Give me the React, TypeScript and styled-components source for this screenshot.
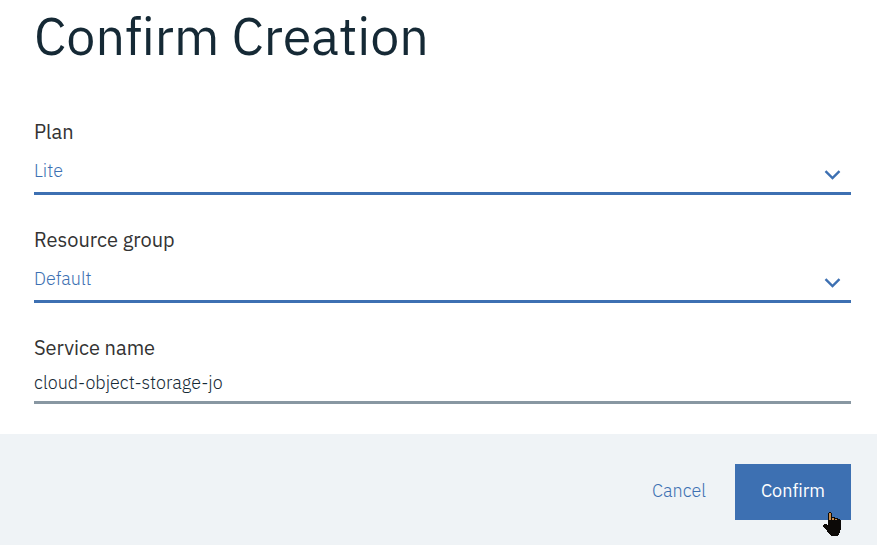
import React from "react";
import styled, { createGlobalStyle } from "styled-components";

const blue = "#3d70b2";
const navy = "#152935";

const GlobalStyle = createGlobalStyle`
  *, *::before, *::after { box-sizing: border-box; }
  body { margin: 0; background: #fff; }
  body, button, input, select {
    font-family: "IBM Plex Sans", Roboto, "Liberation Sans", sans-serif;
    font-variant-ligatures: none;
  }
`;

const Dialog = styled.form`
  display: flex;
  flex-direction: column;
  min-height: 100vh;
`;

const Content = styled.div`
  padding: 0 26px 30px 34px;
`;

const Title = styled.h1`
  margin: 0;
  padding: 4px 0 52px;
  color: ${navy};
  font-size: 52px;
  line-height: 64px;
  font-weight: 400;
`;

const Fields = styled.div`
  display: flex;
  flex-direction: column;
  gap: 33px;
`;

const Field = styled.div`
  display: flex;
  flex-direction: column;
`;

const Label = styled.label`
  color: #333;
  font-size: 20px;
  line-height: 24px;
  font-weight: 400;
`;

const SelectBox = styled.div`
  display: grid;
  align-items: center;
  border-bottom: 3px solid ${blue};

  > * { grid-area: 1 / 1; }
`;

const Select = styled.select`
  appearance: none;
  width: 100%;
  height: 48px;
  margin: 0;
  padding: 6px 40px 0 0;
  border: 0;
  outline: 0;
  background: transparent;
  color: ${blue};
  font-size: 18px;
  font-weight: 300;
  line-height: 24px;
`;

const Chevron = styled.svg`
  justify-self: end;
  margin: 14px 10px 0 0;
  pointer-events: none;
`;

const TextInput = styled.input`
  width: 100%;
  height: 44px;
  padding: 4px 0 0;
  border: 0;
  border-bottom: 3px solid #8897a2;
  border-radius: 0;
  outline: 0;
  background: transparent;
  color: ${navy};
  font-size: 18px;
  font-weight: 300;
`;

const Footer = styled.footer`
  display: flex;
  flex: 1;
  align-items: flex-start;
  justify-content: flex-end;
  padding: 30px 26px 25px;
  background: #eff3f6;
`;

const Button = styled.button<{ $primary?: boolean }>`
  height: 56px;
  min-width: ${(p) => (p.$primary ? "116px" : "112px")};
  padding: 0 24px 4px;
  border: 0;
  background: ${(p) => (p.$primary ? blue : "transparent")};
  color: ${(p) => (p.$primary ? "#fff" : blue)};
  font-size: 18px;
  font-weight: ${(p) => (p.$primary ? 400 : 300)};
  cursor: pointer;
`;

const ConfirmSlot = styled.div`
  position: relative;
`;

const Pointer = styled.svg`
  position: absolute;
  right: 10px;
  bottom: -17px;
  pointer-events: none;
`;

interface SelectFieldProps {
  id: string;
  label: string;
  value: string;
}

function SelectField({ id, label, value }: SelectFieldProps) {
  return (
    <Field>
      <Label htmlFor={id}>{label}</Label>
      <SelectBox>
        <Select id={id} defaultValue={value}>
          <option>{value}</option>
        </Select>
        <Chevron width="17" height="10" viewBox="0 0 17 10" aria-hidden="true">
          <path d="M1.5 1.2 8.5 8l7-6.8" fill="none" stroke={blue} strokeWidth="2.4" />
        </Chevron>
      </SelectBox>
    </Field>
  );
}

export default function App() {
  return (
    <>
      <GlobalStyle />
      <Dialog onSubmit={(e) => e.preventDefault()}>
        <Content>
          <Title>Confirm Creation</Title>
          <Fields>
            <SelectField id="plan" label="Plan" value="Lite" />
            <SelectField id="group" label="Resource group" value="Default" />
            <Field>
              <Label htmlFor="name">Service name</Label>
              <TextInput id="name" type="text" defaultValue="cloud-object-storage-jo" spellCheck={false} />
            </Field>
          </Fields>
        </Content>
        <Footer>
          <Button type="button">Cancel</Button>
          <ConfirmSlot>
            <Button type="submit" $primary>Confirm</Button>
            <Pointer width="18" height="25" viewBox="0 0 18 25" shapeRendering="crispEdges" aria-hidden="true">
              <path d="M6 0h2v1h1v4h3v1h3v1h2v1h1v10h-1v3h-1v2h-1v1H8v-1H7v-1H6v-1H5v-1H4v-2H3v-1H2v-1H1v-1H0v-2h1v-1h3v1h1V1h1z" fill="#0c0907" />
              <path d="M6 1h2v7H6zM9 6h2v2H9zM12 7h2v1h-2z" fill="#c68b4c" />
            </Pointer>
          </ConfirmSlot>
        </Footer>
      </Dialog>
    </>
  );
}
